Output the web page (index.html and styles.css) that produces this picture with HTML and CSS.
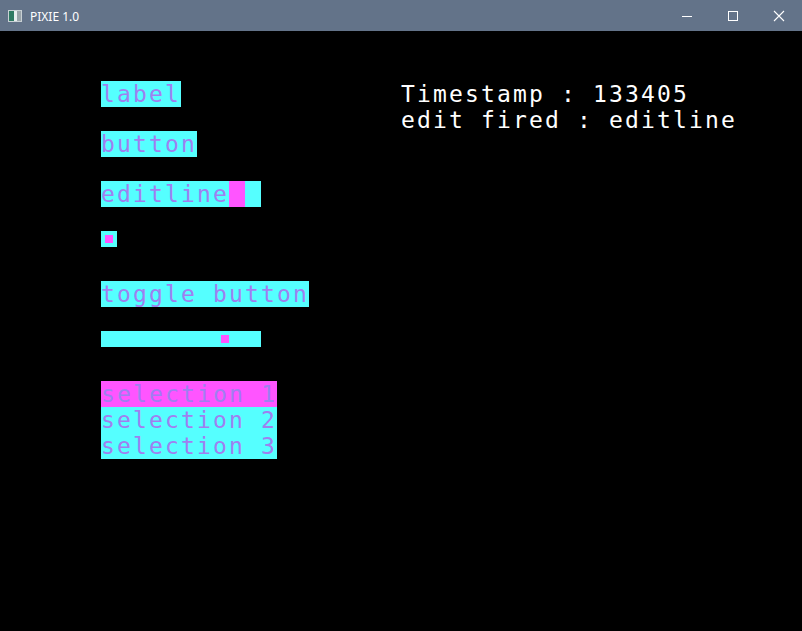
FILE: index.html
```html
<!DOCTYPE html>
<html>
<head>
<meta charset="utf-8">
<link rel="stylesheet" href="styles.css">
</head>
<body>
<div class="window">
  <div class="titlebar">
    <svg class="app-icon" width="16" height="16" viewBox="0 0 16 16">
      <rect x="1.5" y="2.5" width="13" height="11" fill="#e8eef0" stroke="#c8d0d4"/>
      <rect x="2" y="3" width="5" height="10" fill="#2f7a63"/>
      <rect x="10" y="3" width="4" height="10" fill="#9aa4aa"/>
    </svg>
    <span class="title">PIXIE 1.0</span>
    <div class="controls">
      <div class="ctl">
        <svg width="12" height="12" viewBox="0 0 12 12"><path d="M1 6.5h10" stroke="#fff" stroke-width="1"/></svg>
      </div>
      <div class="ctl">
        <svg width="12" height="12" viewBox="0 0 12 12"><rect x="1.5" y="1.5" width="9" height="9" fill="none" stroke="#fff" stroke-width="1"/></svg>
      </div>
      <div class="ctl">
        <svg width="12" height="12" viewBox="0 0 12 12"><path d="M1 1L11 11M11 1L1 11" stroke="#fff" stroke-width="1.1"/></svg>
      </div>
    </div>
  </div>
  <div class="screen">
    <div class="widgets">
      <div class="slot"><span class="w">label</span></div>
      <div class="slot"><span class="w">button</span></div>
      <div class="slot"><span class="w">editline<span class="cursor"></span><span class="pad"></span></span></div>
      <div class="slot"><span class="check"><span class="mark"></span></span></div>
      <div class="slot"><span class="w">toggle button</span></div>
      <div class="slot"><span class="slider"><span class="knob"></span></span></div>
      <div class="slot">
        <div class="list">
          <div class="item sel">selection 1</div>
          <div class="item">selection 2</div>
          <div class="item">selection 3</div>
        </div>
      </div>
    </div>
    <div class="log">
      <div class="line">Timestamp : 133405</div>
      <div class="line">edit fired : editline</div>
    </div>
  </div>
</div>
</body>
</html>
```
FILE: styles.css
```css
html, body {
  margin: 0;
  padding: 0;
  background: #000;
}
.window {
  width: 802px;
  height: 631px;
  display: flex;
  flex-direction: column;
  background: #000;
}
.titlebar {
  height: 31px;
  flex: none;
  background: #637389;
  display: flex;
  align-items: center;
  font-family: "Noto Sans", "Open Sans", sans-serif;
  font-size: 12px;
  color: #fff;
}
.app-icon {
  margin-left: 7px;
  margin-top: 1px;
}
.title {
  margin-left: 7px;
  margin-top: 1px;
}
.controls {
  margin-left: auto;
  display: flex;
  height: 100%;
}
.ctl {
  width: 46px;
  height: 100%;
  display: flex;
  align-items: center;
  justify-content: center;
}
.screen {
  flex: 1;
  display: flex;
  align-items: flex-start;
  padding: 50px 0 0 101px;
  font-family: "DejaVu Sans Mono", monospace;
  font-size: 23px;
  line-height: 26px;
  letter-spacing: 2.15px;
}
.widgets {
  width: 300px;
  display: flex;
  flex-direction: column;
}
.slot {
  height: 50px;
  display: flex;
  align-items: flex-start;
}
.w {
  background: #55ffff;
  color: #a07ff0;
  height: 26px;
  white-space: pre;
  display: inline-flex;
}
.cursor, .pad {
  display: inline-block;
  width: 16px;
  height: 26px;
}
.cursor {
  background: #ff55ff;
}
.check {
  width: 16px;
  height: 16px;
  background: #55ffff;
  display: flex;
  align-items: center;
  justify-content: center;
}
.mark {
  width: 8px;
  height: 8px;
  background: #ff55ff;
}
.slider {
  width: 160px;
  height: 16px;
  background: #55ffff;
  display: flex;
  align-items: center;
  padding-left: 120px;
  box-sizing: border-box;
}
.knob {
  width: 8px;
  height: 8px;
  background: #ff55ff;
}
.list {
  display: flex;
  flex-direction: column;
}
.item {
  background: #55ffff;
  color: #a07ff0;
  height: 26px;
  white-space: pre;
}
.item.sel {
  background: #ff55ff;
}
.log {
  color: #fff;
  display: flex;
  flex-direction: column;
}
.line {
  height: 26px;
  white-space: pre;
}
```
